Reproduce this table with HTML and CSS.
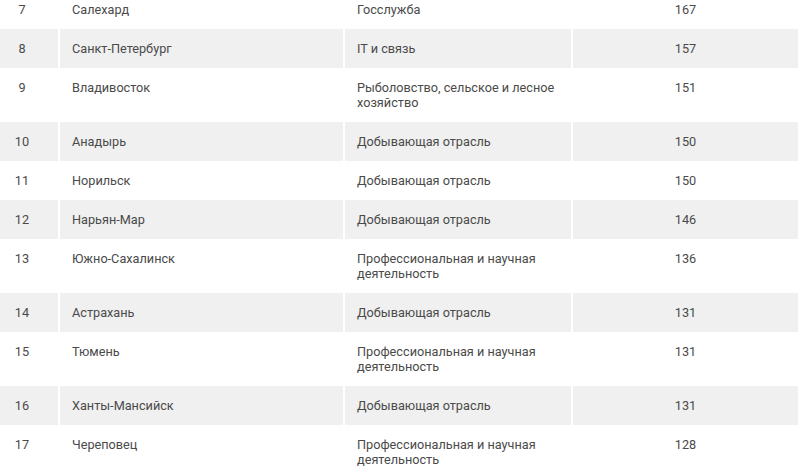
FILE: index.html
```html
<!DOCTYPE html>
<html lang="ru">
<head>
<meta charset="utf-8">
<title>Рейтинг городов</title>
<link rel="stylesheet" href="styles.css">
</head>
<body>
<div class="viewport">
<table class="rating">
  <colgroup>
    <col class="c-rank">
    <col class="c-city">
    <col class="c-field">
    <col class="c-value">
  </colgroup>
  <tbody>
    <tr><td class="rank">7</td><td>Салехард</td><td>Госслужба</td><td class="value">167</td></tr>
    <tr><td class="rank">8</td><td>Санкт-Петербург</td><td>IT и связь</td><td class="value">157</td></tr>
    <tr><td class="rank">9</td><td>Владивосток</td><td>Рыболовство, сельское и лесное хозяйство</td><td class="value">151</td></tr>
    <tr><td class="rank">10</td><td>Анадырь</td><td>Добывающая отрасль</td><td class="value">150</td></tr>
    <tr><td class="rank">11</td><td>Норильск</td><td>Добывающая отрасль</td><td class="value">150</td></tr>
    <tr><td class="rank">12</td><td>Нарьян-Мар</td><td>Добывающая отрасль</td><td class="value">146</td></tr>
    <tr><td class="rank">13</td><td>Южно-Сахалинск</td><td>Профессиональная и научная деятельность</td><td class="value">136</td></tr>
    <tr><td class="rank">14</td><td>Астрахань</td><td>Добывающая отрасль</td><td class="value">131</td></tr>
    <tr><td class="rank">15</td><td>Тюмень</td><td>Профессиональная и научная деятельность</td><td class="value">131</td></tr>
    <tr><td class="rank">16</td><td>Ханты-Мансийск</td><td>Добывающая отрасль</td><td class="value">131</td></tr>
    <tr><td class="rank">17</td><td>Череповец</td><td>Профессиональная и научная деятельность</td><td class="value">128</td></tr>
  </tbody>
</table>
</div>
</body>
</html>
```
FILE: styles.css
```css
html, body {
  margin: 0;
  padding: 0;
  background: #ffffff;
}

.viewport {
  width: 800px;
  height: 473px;
  overflow: hidden;
}

.rating {
  table-layout: fixed;
  border-collapse: separate;
  border-spacing: 2px 0;
  width: 802px;
  margin: -10px 0 0 -2px;
  font-family: Roboto, "Noto Sans", sans-serif;
  font-size: 12.7px;
  line-height: 15px;
  color: #4a4a4a;
}

.c-rank { width: 58px; }
.c-city { width: 283px; }
.c-field { width: 226px; }
.c-value { width: 225px; }

.rating td {
  box-sizing: border-box;
  padding: 12px 10px 12px 12px;
  vertical-align: top;
  text-align: left;
}

.rating tr:nth-child(even) td {
  background: #f0f0f0;
}

.rating td.rank {
  text-align: center;
  padding-left: 0;
  padding-right: 14px;
}

.rating td.value {
  text-align: center;
  padding-left: 12px;
  padding-right: 12px;
}
```
